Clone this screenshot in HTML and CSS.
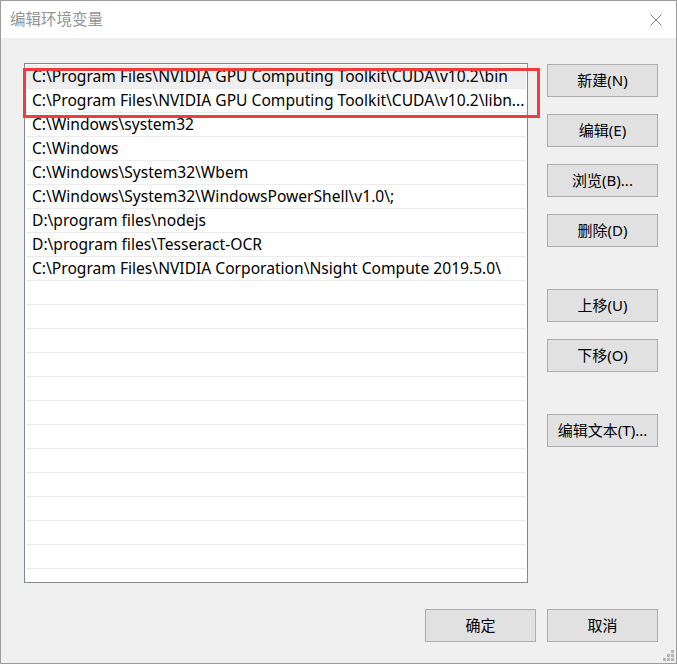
FILE: index.html
```html
<!DOCTYPE html>
<html lang="zh-CN">
<head>
  <meta charset="UTF-8" />
  <title>编辑环境变量</title>
  <link rel="stylesheet" href="styles.css">
</head>
<body>
  <div class="window">
    <div class="titlebar">
      <span class="title">编辑环境变量</span>
      <svg class="close" width="12" height="12" viewBox="0 0 12 12">
        <path d="M0.5 0.5 L11.5 11.5 M11.5 0.5 L0.5 11.5" stroke="#7a7a7a" stroke-width="1" fill="none" />
      </svg>
    </div>

    <div class="content">
      <div class="pathlist">
        <div class="row selected">C:\Program Files\NVIDIA GPU Computing Toolkit\CUDA\v10.2\bin</div>
        <div class="row">C:\Program Files\NVIDIA GPU Computing Toolkit\CUDA\v10.2\libn...</div>
        <div class="row">C:\Windows\system32</div>
        <div class="row">C:\Windows</div>
        <div class="row">C:\Windows\System32\Wbem</div>
        <div class="row">C:\Windows\System32\WindowsPowerShell\v1.0\;</div>
        <div class="row">D:\program files\nodejs</div>
        <div class="row">D:\program files\Tesseract-OCR</div>
        <div class="row">C:\Program Files\NVIDIA Corporation\Nsight Compute 2019.5.0\</div>
        <div class="row"></div>
        <div class="row"></div>
        <div class="row"></div>
        <div class="row"></div>
        <div class="row"></div>
        <div class="row"></div>
        <div class="row"></div>
        <div class="row"></div>
        <div class="row"></div>
        <div class="row"></div>
        <div class="row"></div>
        <div class="row"></div>
      </div>

      <div class="actions">
        <button class="btn">新建(N)</button>
        <button class="btn">编辑(E)</button>
        <button class="btn">浏览(B)...</button>
        <button class="btn">删除(D)</button>
        <button class="btn group">上移(U)</button>
        <button class="btn">下移(O)</button>
        <button class="btn group">编辑文本(T)...</button>
      </div>
    </div>

    <div class="footer">
      <button class="btn">确定</button>
      <button class="btn">取消</button>
    </div>

    <!-- red marker around the two CUDA entries -->
    <div class="marker"></div>

    <svg class="grip" width="11" height="11" viewBox="0 0 11 11">
      <rect x="8" y="0" width="3" height="3" fill="#b4b4b4" />
      <rect x="4" y="4" width="3" height="3" fill="#b4b4b4" />
      <rect x="8" y="4" width="3" height="3" fill="#b4b4b4" />
      <rect x="0" y="8" width="3" height="3" fill="#b4b4b4" />
      <rect x="4" y="8" width="3" height="3" fill="#b4b4b4" />
      <rect x="8" y="8" width="3" height="3" fill="#b4b4b4" />
    </svg>
  </div>
</body>
</html>
```

FILE: styles.css
```css
body {
  margin: 0;
  font-family: "Noto Sans", "Noto Sans CJK SC", sans-serif;
  font-size: 15px;
  color: #000;
  background: #f0f0f0;
}
.window {
  position: relative;
  width: 677px;
  height: 664px;
  box-sizing: border-box;
  border: 1px solid #9c9c9c;
  background: #f0f0f0;
  display: flex;
  flex-direction: column;
}
.titlebar {
  height: 37px;
  flex: none;
  background: #fff;
  display: flex;
  align-items: center;
  justify-content: space-between;
  padding: 0 14px 0 9px;
}
.title {
  color: #949494;
  font-size: 15.5px;
  line-height: 1;
  margin-top: 1px;
}
.close {
  display: block;
  margin-top: 1px;
}
.content {
  display: flex;
  gap: 19px;
  padding: 25px 18px 0 23px;
}
.pathlist {
  width: 504px;
  height: 520px;
  box-sizing: border-box;
  border: 1px solid #828790;
  background: #fff;
  padding: 1px 1px 0;
  overflow: hidden;
}
.row {
  height: 23px;
  line-height: 23px;
  font-size: 15.6px;
  border-bottom: 1px solid #ececec;
  padding: 0 0 0 6px;
  white-space: nowrap;
}
.row.selected {
  background: #eeeeee;
}
.actions {
  display: flex;
  flex-direction: column;
  gap: 17px;
  padding-top: 1px;
}
.btn {
  width: 111px;
  height: 33px;
  box-sizing: border-box;
  border: 1px solid #adadad;
  background: #e1e1e1;
  font-family: inherit;
  font-size: 15px;
  color: #000;
  padding: 0 0 2px;
}
.btn.group {
  margin-top: 25px;
}
.footer {
  display: flex;
  justify-content: flex-end;
  gap: 11px;
  padding: 26px 18px 21px 0;
}
.marker {
  position: absolute;
  left: 22px;
  top: 67px;
  width: 517px;
  height: 50px;
  box-sizing: border-box;
  border: 3px solid #f03c3c;
}
.grip {
  position: absolute;
  right: 2px;
  bottom: 2px;
}
```
